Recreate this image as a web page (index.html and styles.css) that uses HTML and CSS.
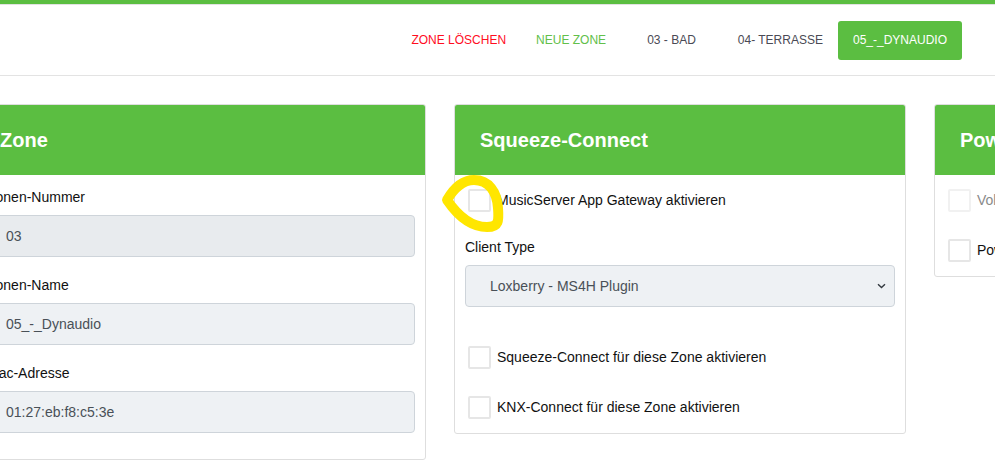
FILE: index.html
```html
<!DOCTYPE html>
<html lang="de">
<head>
<meta charset="utf-8">
<title>Zone</title>
<link rel="stylesheet" href="styles.css">
</head>
<body>
<div class="topbar"></div>
<header class="nav">
  <a class="nav-link nav-delete">ZONE LÖSCHEN</a>
  <a class="nav-link nav-new">NEUE ZONE</a>
  <a class="nav-link nav-zone nav-zone-first">03 - BAD</a>
  <a class="nav-link nav-zone">04- TERRASSE</a>
  <a class="nav-active">05_-_DYNAUDIO</a>
</header>
<main class="cards">
  <section class="card">
    <div class="card-header">Zone</div>
    <div class="card-body card-body-form">
      <div class="field">
        <div class="field-label">Zonen-Nummer</div>
        <div class="input input-disabled">03</div>
      </div>
      <div class="field">
        <div class="field-label">Zonen-Name</div>
        <div class="input">05_-_Dynaudio</div>
      </div>
      <div class="field">
        <div class="field-label">Mac-Adresse</div>
        <div class="input">01:27:eb:f8:c5:3e</div>
      </div>
    </div>
  </section>
  <section class="card">
    <div class="card-header">Squeeze-Connect</div>
    <div class="card-body">
      <div class="check-row"><span class="checkbox"></span><span>MusicServer App Gateway aktivieren</span></div>
      <div class="select-group">
        <div class="select-label">Client Type</div>
        <div class="select">
          <span>Loxberry - MS4H Plugin</span>
          <svg class="chevron" width="9" height="6" viewBox="0 0 9 6"><path d="M1 1.2 L4.5 4.6 L8 1.2" fill="none" stroke="#343a40" stroke-width="1.4"/></svg>
        </div>
      </div>
      <div class="check-row"><span class="checkbox"></span><span>Squeeze-Connect für diese Zone aktivieren</span></div>
      <div class="check-row"><span class="checkbox"></span><span>KNX-Connect für diese Zone aktivieren</span></div>
    </div>
  </section>
  <section class="card">
    <div class="card-header">Power</div>
    <div class="card-body">
      <div class="check-row check-disabled"><span class="checkbox"></span><span>Volume</span></div>
      <div class="check-row"><span class="checkbox"></span><span>Power</span></div>
    </div>
  </section>
</main>
<svg class="annotation" width="995" height="465" viewBox="0 0 995 465">
  <path d="M447 200 C454 188 463 180 474 180 C489 180 497 192 498 208 C499 221 499 227 487 227 C474 227 460 219 447 200 Z" fill="none" stroke="#ffe600" stroke-width="10" stroke-linejoin="round"/>
</svg>
</body>
</html>
```
FILE: styles.css
```css
* { box-sizing: border-box; }

html, body {
  margin: 0;
  padding: 0;
  width: 995px;
  height: 465px;
  overflow: hidden;
  background: #ffffff;
}

body {
  position: relative;
  font-family: "Liberation Sans", Arial, sans-serif;
  font-size: 14px;
  color: #111111;
}

.topbar {
  height: 5px;
  background: #5bbe41;
  border-bottom: 1px solid #e2e2e2;
}

.nav {
  height: 71px;
  border-bottom: 1px solid #e3e3e3;
  display: flex;
  justify-content: flex-end;
  align-items: center;
  padding-right: 33px;
  font-size: 12px;
}

.nav-link {
  padding: 0 15px;
  line-height: 39px;
}

.nav-delete { color: #ff0d1f; }
.nav-new { color: #62c04a; }
.nav-zone { color: #4a4a55; }
.nav-zone-first { margin-left: 11px; }
.nav-zone + .nav-zone { margin-left: 12px; }

.nav-active {
  background: #5bbe41;
  color: #ffffff;
  height: 39px;
  line-height: 39px;
  padding: 0 15px;
  border-radius: 3px;
  margin-top: 1px;
}

.cards {
  display: grid;
  grid-template-columns: 452px 452px 452px;
  column-gap: 28px;
  align-items: start;
  margin-left: -26px;
  margin-top: 28px;
}

.card {
  border: 1px solid #dedede;
  border-radius: 3px;
  background: #ffffff;
  overflow: hidden;
}

.card-header {
  height: 70px;
  background: #5bbe41;
  color: #ffffff;
  font-weight: bold;
  font-size: 20px;
  padding: 0 25px;
  display: flex;
  align-items: center;
}

.card-body {
  padding: 0 10px 1px;
}

.card-body-form {
  padding: 12px 10px 8px;
}

.field {
  margin-bottom: 18px;
}

.field-label {
  line-height: 20px;
  margin-bottom: 8px;
  padding-left: 2px;
}

.input {
  height: 42px;
  border: 1px solid #ced4da;
  border-radius: 4px;
  background: #eef1f4;
  color: #495057;
  display: flex;
  align-items: center;
  padding-left: 20px;
}

.input-disabled {
  background: #e8ebee;
}

.check-row {
  height: 50px;
  display: flex;
  align-items: center;
}

.checkbox {
  width: 23px;
  height: 23px;
  border: 2px solid #e6e6e6;
  border-radius: 2px;
  background: #ffffff;
  margin-left: 3px;
  margin-right: 6px;
  flex: none;
}

.check-disabled { color: #8a8a8a; }
.check-disabled .checkbox { border-color: #f1f1f1; }

.select-group {
  margin-top: 12px;
  margin-bottom: 25px;
}

.select-label {
  line-height: 20px;
  margin-bottom: 8px;
}

.select {
  height: 42px;
  border: 1px solid #ced4da;
  border-radius: 4px;
  background: #eef1f4;
  color: #495057;
  display: flex;
  align-items: center;
  justify-content: space-between;
  padding: 0 8px 0 24px;
}

.chevron { display: block; }

.annotation {
  position: absolute;
  top: 0;
  left: 0;
  pointer-events: none;
}
```
